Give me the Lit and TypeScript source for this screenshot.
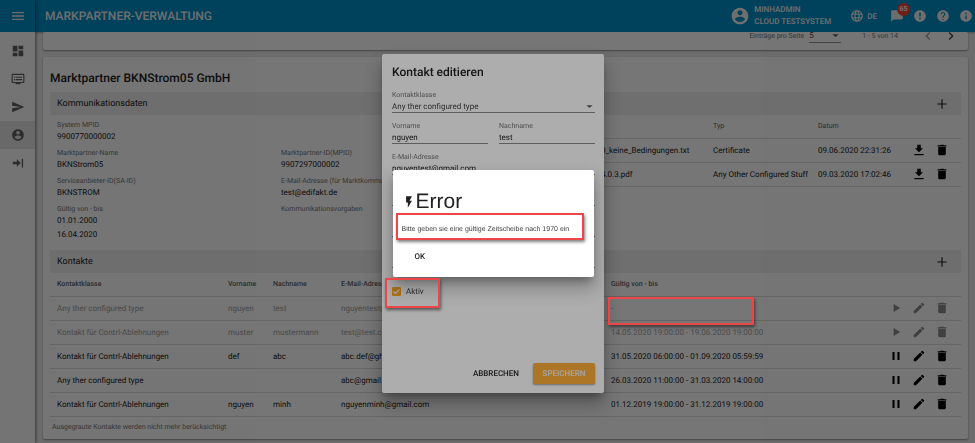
import { LitElement, html, css, svg, nothing } from "lit";
import { customElement, property } from "lit/decorators.js";

const ICONS: Record<string, string> = {
  menu: "M3 18h18v-2H3v2zm0-5h18v-2H3v2zm0-7v2h18V6H3z",
  dashboard: "M3 13h8V3H3v10zm0 8h8v-6H3v6zm10 0h8V11h-8v10zm0-18v6h8V3h-8z",
  list:
    "M21 3H3c-1.1 0-2 .9-2 2v12c0 1.1.9 2 2 2h5v2h8v-2h5c1.1 0 1.990-.9 1.990-2L23 5c0-1.100-.9-2-2-2zm0 14H3V5h18v12zM19 8H8v2h11V8zm0 4H8v2h11v-2zM7 8H5v2h2V8zm0 4H5v2h2v-2z",
  send: "M2.010 21L23 12 2.010 3 2 10l15 2-15 2z",
  account:
    "M12 2C6.480 2 2 6.480 2 12s4.480 10 10 10 10-4.480 10-10S17.520 2 12 2zm0 3c1.660 0 3 1.340 3 3s-1.340 3-3 3-3-1.340-3-3 1.340-3 3-3zm0 14.200c-2.500 0-4.710-1.280-6-3.220.030-1.990 4-3.080 6-3.080 1.990 0 5.970 1.090 6 3.080-1.290 1.940-3.500 3.220-6 3.220z",
  exit: "M3 10h7V5.500L16.800 12 10 18.500V14H3zM18.500 4.500h2.200v15h-2.200z",
  globe:
    "M11.990 2C6.470 2 2 6.480 2 12s4.470 10 9.990 10C17.520 22 22 17.520 22 12S17.520 2 11.990 2zm6.930 6h-2.950c-.32-1.250-.78-2.450-1.380-3.560 1.840.63 3.370 1.910 4.330 3.560zM12 4.040c.83 1.200 1.480 2.530 1.910 3.960h-3.820c.43-1.430 1.080-2.760 1.910-3.960zM4.260 14C4.100 13.360 4 12.690 4 12s.1-1.360.26-2h3.380c-.08.66-.14 1.320-.14 2s.06 1.340.14 2H4.260zm.82 2h2.950c.32 1.250.78 2.450 1.380 3.560-1.840-.63-3.370-1.900-4.330-3.560zm2.950-8H5.080c.96-1.660 2.490-2.930 4.330-3.560C8.810 5.550 8.350 6.750 8.030 8zM12 19.960c-.83-1.200-1.480-2.530-1.910-3.960h3.820c-.43 1.430-1.080 2.760-1.910 3.960zM14.340 14H9.660c-.09-.66-.16-1.320-.16-2s.07-1.350.16-2h4.680c.09.65.16 1.320.16 2s-.07 1.340-.16 2zm.25 5.560c.6-1.110 1.060-2.310 1.380-3.560h2.950c-.96 1.650-2.490 2.930-4.330 3.560zM16.360 14c.08-.66.14-1.320.14-2s-.06-1.340-.14-2h3.380c.16.64.26 1.310.26 2s-.1 1.360-.26 2h-3.380z",
  chat: "M20 2H4c-1.100 0-2 .9-2 2v18l4-4h14c1.100 0 2-.9 2-2V4c0-1.100-.9-2-2-2z",
  alert:
    "M12 2C6.480 2 2 6.480 2 12s4.480 10 10 10 10-4.480 10-10S17.520 2 12 2zm1.300 15.500h-2.600V15h2.600v2.500zm0-4.500h-2.600V6.500h2.600V13z",
  help:
    "M12 2C6.480 2 2 6.480 2 12s4.480 10 10 10 10-4.480 10-10S17.520 2 12 2zm1 17h-2v-2h2v2zm2.070-7.750l-.9.920C13.450 12.900 13 13.500 13 15h-2v-.5c0-1.100.45-2.100 1.170-2.830l1.240-1.260c.37-.36.59-.86.59-1.410 0-1.100-.9-2-2-2s-2 .9-2 2H8c0-2.210 1.790-4 4-4s4 1.790 4 4c0 .88-.36 1.680-.93 2.250z",
  info: "M12 2C6.480 2 2 6.480 2 12s4.480 10 10 10 10-4.480 10-10S17.520 2 12 2zm1.200 15h-2.400v-6h2.400v6zm0-8h-2.400V6.600h2.400V9z",
  left: "M15.410 7.410L14 6l-6 6 6 6 1.410-1.410L10.830 12z",
  right: "M10 6L8.590 7.410 13.170 12l-4.580 4.590L10 18l6-6z",
  down: "M5 9.500l7 6 7-6z",
  plus: "M20 13h-7v7h-2v-7H4v-2h7V4h2v7h7v2z",
  download: "M19 9h-4V3H9v6H5l7 7 7-7zM4 19v2h16v-2H4z",
  trash: "M5.500 19c0 1.100.9 2 2 2h9c1.100 0 2-.9 2-2V7h-13v12zM19.500 4h-4l-1-1h-5l-1 1h-4v2h15V4z",
  play: "M8 5v14l11-7z",
  pause: "M6 19h3.500V5H6v14zm8.500-14v14H18V5h-3.500z",
  edit:
    "M3 17.250V21h3.750L17.810 9.940l-3.750-3.750L3 17.250zM20.710 7.040c.39-.39.39-1.020 0-1.410l-2.340-2.340c-.39-.39-1.020-.39-1.410 0l-1.830 1.830 3.750 3.750 1.830-1.830z",
  bolt: "M7 2v11h3v9l7-12h-4l4-8z",
};

@customElement("mp-icon")
export class MpIcon extends LitElement {
  @property() name = "menu";

  static styles = css`
    :host {
      display: inline-flex;
      flex: none;
      width: var(--size, 14px);
      height: var(--size, 14px);
    }
    .glyph {
      width: 100%;
      height: 100%;
      fill: currentColor;
    }
  `;

  render() {
    return html`<svg class="glyph" viewBox="0 0 24 24" aria-hidden="true">
      ${svg`<path d=${ICONS[this.name]}></path>`}
    </svg>`;
  }
}

const icon = (name: string) => html`<mp-icon name=${name}></mp-icon>`;

const NAV = [
  ["dashboard", "Dashboard"],
  ["list", "Nachrichten"],
  ["send", "Versand"],
  ["account", "Marktpartner"],
  ["exit", "Abmelden"],
];

const DETAILS: [string, string[]][] = [
  ["System MPID", ["9900770000002"]],
  ["", []],
  ["Marktpartner-Name", ["BKNStrom05"]],
  ["Marktpartner-ID(MPID)", ["9907297000002"]],
  ["Serviceanbieter-ID(SA-ID)", ["BKNSTROM"]],
  ["E-Mail-Adresse (für Marktkommunikation)", ["test@edifakt.de"]],
  ["Gültig von - bis", ["01.01.2000", "16.04.2020"]],
  ["Kommunikationsvorgaben", []],
];

const DOCS = [
  ["0_keine_Bedingungen.txt", "Certificate", "09.06.2020 22:31:26"],
  ["4.0.3.pdf", "Any Other Configured Stuff", "09.03.2020 17:02:46"],
];

interface Contact {
  type: string;
  first: string;
  last: string;
  mail: string;
  range: string;
  active: boolean;
}

const CONTACTS: Contact[] = [
  { type: "Any ther configured type", first: "nguyen", last: "test", mail: "nguyentest@gmail.com", range: "-", active: false },
  { type: "Kontakt für Contrl-Ablehnungen", first: "muster", last: "mustermann", mail: "test@test.com", range: "14.05.2020 19:00:00 - 19.06.2020 19:00:00", active: false },
  { type: "Kontakt für Contrl-Ablehnungen", first: "def", last: "abc", mail: "abc.def@ghi.com", range: "31.05.2020 06:00:00 - 01.09.2020 05:59:59", active: true },
  { type: "Any ther configured type", first: "", last: "", mail: "abc@gmail.com", range: "26.03.2020 11:00:00 - 31.03.2020 14:00:00", active: true },
  { type: "Kontakt für Contrl-Ablehnungen", first: "nguyen", last: "minh", mail: "nguyenminh@gmail.com", range: "01.12.2019 19:00:00 - 31.12.2019 19:00:00", active: true },
];

@customElement("app-root")
export class AppRoot extends LitElement {
  static styles = css`
    :host {
      display: block;
      height: 100vh;
      overflow: hidden;
      background: #ececec;
      color: #212121;
      font: 8px/11px Roboto, sans-serif;
      text-rendering: geometricPrecision;
    }
    * {
      box-sizing: border-box;
    }
    button,
    input,
    select {
      margin: 0;
      padding: 0;
      border: 0;
      border-radius: 0;
      outline: 0;
      background: none;
      color: inherit;
      font: inherit;
      text-rendering: inherit;
      appearance: none;
    }
    button {
      display: inline-flex;
      align-items: center;
      justify-content: center;
    }
    h1,
    h2,
    h3,
    p,
    dl,
    dd {
      margin: 0;
      font-weight: 400;
    }
    .shell {
      display: flex;
      height: 100%;
    }
    .side {
      flex: none;
      width: 35px;
      background: #fcfcfc;
      box-shadow: 1px 0 3px rgba(0, 0, 0, 0.5);
      z-index: 2;
    }
    .burger {
      width: 100%;
      height: 32px;
      background: #018ec8;
      color: #ececec;
      --size: 16px;
    }
    .nav {
      display: flex;
      flex-direction: column;
      padding-top: 5px;
    }
    .nav-link {
      display: flex;
      align-items: center;
      justify-content: center;
      height: 28px;
      color: #616161;
    }
    .nav-link.current {
      background: #e4e4e4;
    }
    .body {
      flex: 1;
      min-width: 0;
      display: flex;
      flex-direction: column;
    }
    .bar {
      flex: none;
      display: flex;
      align-items: center;
      height: 32px;
      padding: 0 2px 0 10px;
      background: #018ec8;
      color: #f0f0f0;
      box-shadow: 0 1px 2px rgba(0, 0, 0, 0.3);
      font-weight: 500;
    }
    .app-title {
      flex: 1;
      font-size: 12px;
      line-height: 16px;
      font-weight: 500;
    }
    .user {
      display: flex;
      align-items: center;
      gap: 4px;
      --size: 20px;
      line-height: 12px;
    }
    .lang {
      gap: 3px;
      margin: 0 13px 0 19px;
      font-weight: 500;
    }
    .tools {
      display: flex;
      gap: 9px;
    }
    .tool {
      position: relative;
    }
    .badge {
      position: absolute;
      top: -6px;
      left: 7px;
      width: 13px;
      height: 13px;
      border-radius: 50%;
      background: #f44336;
      color: #fff;
      font-size: 7px;
      line-height: 13px;
      text-align: center;
    }
    .content {
      padding: 0 7px 0 8px;
    }
    .card {
      background: #fff;
      border-radius: 2px;
      box-shadow: 0 1px 2px rgba(0, 0, 0, 0.4);
    }
    .pager {
      display: flex;
      align-items: center;
      justify-content: flex-end;
      height: 18px;
      padding: 0 9px 10px 0;
      color: #757575;
      font-size: 7px;
    }
    .page-size {
      display: flex;
      align-items: center;
      gap: 5px;
    }
    .select-wrap {
      display: flex;
      align-items: center;
      border-bottom: 1px solid #949494;
    }
    .page-size .select-wrap {
      width: 32px;
      height: 14px;
      font-size: 8px;
    }
    .select {
      flex: 1;
      min-width: 0;
      color: #424242;
    }
    .caret {
      --size: 11px;
      display: flex;
      color: #616161;
    }
    .count {
      margin: 0 15px 0 21px;
    }
    .turn {
      --size: 16px;
      margin-left: 7px;
      color: #424242;
    }
    .turn:disabled {
      color: #9e9e9e;
    }
    .partner {
      margin-top: 7px;
      padding: 13px 7px 6px;
    }
    .partner-title {
      font-size: 12px;
      line-height: 16px;
      font-weight: 500;
      padding-bottom: 6px;
    }
    .section {
      display: flex;
      align-items: center;
      justify-content: space-between;
      height: 23px;
      padding: 0 12px 0 7px;
      background: #efefef;
    }
    .section-title {
      font-size: 9px;
      line-height: 14px;
    }
    .split {
      display: grid;
      grid-template-columns: minmax(0, 1fr) 360px;
      padding-bottom: 10px;
    }
    .details {
      display: grid;
      grid-template-columns: 224px minmax(0, 1fr);
      row-gap: 6px;
      padding: 5px 0 0 7px;
      white-space: nowrap;
    }
    .detail {
      min-height: 22px;
    }
    .label {
      color: #757575;
      font-size: 7px;
    }
    .value + .value {
      margin-top: 3px;
    }
    .table {
      width: 100%;
      table-layout: fixed;
      border-collapse: collapse;
      text-align: left;
    }
    .table th,
    .table td {
      height: 24px;
      padding: 0;
      border-bottom: 1px solid #dcdcdc;
      font-weight: 400;
      white-space: nowrap;
    }
    .table th {
      height: 23px;
      color: #616161;
      font-size: 7px;
    }
    .table.contacts th {
      font-weight: 500;
    }
    .contacts th:first-child,
    .contacts td:first-child {
      padding-left: 7px;
    }
    .table .inactive td {
      color: #9e9e9e;
    }
    .actions {
      display: flex;
      justify-content: flex-end;
      gap: 9px;
      padding-right: 12px;
      color: #000;
    }
    .inactive .actions {
      color: #8c8c8c;
    }
    .w-type {
      width: 178px;
    }
    .w-first {
      width: 45px;
    }
    .w-last {
      width: 68px;
    }
    .w-actions {
      width: 80px;
    }
    .w-file {
      width: 112px;
    }
    .w-kind {
      width: 105px;
    }
    .note {
      padding: 5px 2px 0;
      color: #757575;
      font-size: 7px;
    }
    .marked {
      position: relative;
    }
    .mark {
      position: absolute;
      z-index: 30;
      border: 2px solid #ee4548;
      box-shadow: 1px 2px 3px rgba(0, 0, 0, 0.5);
      pointer-events: none;
    }
    .mark-range {
      left: -3px;
      top: 0;
      width: 146px;
      height: 28px;
    }
    .overlay {
      position: fixed;
      inset: 0;
      z-index: 10;
      display: flex;
      align-items: center;
      justify-content: center;
      padding: 4px 0 0 11px;
      background: rgba(0, 0, 0, 0.32);
    }
    .overlay.top {
      z-index: 20;
    }
    .dialog {
      display: flex;
      flex-direction: column;
      width: 222px;
      min-height: 339px;
      padding: 10px 9px 9px 10px;
      border-radius: 2px;
      background: #fff;
      box-shadow: 0 6px 8px -3px rgba(0, 0, 0, 0.3), 0 10px 18px 2px rgba(0, 0, 0, 0.24);
    }
    .dialog-title {
      padding-bottom: 10px;
      font-size: 12px;
      line-height: 16px;
      font-weight: 500;
    }
    .fields {
      display: grid;
      grid-template-columns: 1fr 1fr;
      gap: 8px 11px;
    }
    .field {
      display: flex;
      flex-direction: column;
      min-width: 0;
    }
    .wide {
      grid-column: 1 / -1;
    }
    .input {
      width: 100%;
      height: 12px;
      border-bottom: 1px solid #8a8a8a;
    }
    .input.bare {
      height: 23px;
    }
    .field .select-wrap {
      height: 12px;
      border-color: #8a8a8a;
    }
    .check-row {
      display: flex;
      align-items: center;
      gap: 5px;
      padding-top: 18px;
      color: #424242;
    }
    .check {
      width: 9px;
      height: 9px;
      border-radius: 1px;
      background: #ffab2e
        url("data:image/svg+xml,%3Csvg xmlns='http://www.w3.org/2000/svg' viewBox='0 0 9 9'%3E%3Cpath d='M1.500 4.500l2 2 4-4' fill='none' stroke='white' stroke-width='1.200'/%3E%3C/svg%3E");
    }
    .mark-check {
      left: -8px;
      top: 108px;
      width: 55px;
      height: 30px;
    }
    .buttons {
      display: flex;
      justify-content: flex-end;
      gap: 14px;
      margin-top: auto;
    }
    .btn {
      height: 21px;
      font-size: 8px;
      font-weight: 500;
    }
    .btn.primary {
      width: 62px;
      border-radius: 2px;
      background: #ffae3a;
      color: #f5f5f5;
      box-shadow: 0 1px 2px rgba(0, 0, 0, 0.4);
    }
    .alert {
      position: relative;
      width: 201px;
      min-height: 107px;
      padding: 20px 9px 10px;
      border-radius: 2px;
      background: #fff;
      box-shadow: 0 6px 8px -3px rgba(0, 0, 0, 0.3), 0 10px 18px 2px rgba(0, 0, 0, 0.24);
    }
    .alert-title {
      display: flex;
      align-items: center;
      font: 21px/24px "Liberation Sans", Arial, sans-serif;
      --size: 14px;
    }
    .message {
      position: relative;
      padding-top: 10px;
      color: #424242;
      font: 7px/11px "Liberation Sans", Arial, sans-serif;
      white-space: nowrap;
    }
    .mark-message {
      left: -6px;
      top: -1px;
      width: 188px;
      height: 27px;
    }
    .alert .btn {
      margin: 11px 0 0 13px;
    }
  `;

  private head = (labels: string[]) => html`<thead>
    <tr>
      ${labels.map((l) => html`<th scope="col">${l}</th>`)}
    </tr>
  </thead>`;

  private action = (name: string, label: string) => html`<button aria-label=${label}>${icon(name)}</button>`;

  private renderBar() {
    return html`<header class="bar">
      <h1 class="app-title">MARKPARTNER-VERWALTUNG</h1>
      <div class="user">
        ${icon("account")}
        <div>
          <div>MINHADMIN</div>
          <div>CLOUD TESTSYSTEM</div>
        </div>
      </div>
      <button class="lang">${icon("globe")}DE</button>
      <div class="tools">
        <button class="tool" aria-label="Nachrichten">${icon("chat")}<span class="badge">65</span></button>
        ${this.action("alert", "Hinweise")} ${this.action("help", "Hilfe")} ${this.action("info", "Info")}
      </div>
    </header>`;
  }

  private renderPager() {
    return html`<section class="card pager">
      <label class="page-size"
        >Einträge pro Seite
        <span class="select-wrap"
          ><select class="select">
            <option>5</option></select
          ><span class="caret">${icon("down")}</span></span
        ></label
      >
      <span class="count">1 - 5 von 14</span>
      <button class="turn" disabled aria-label="Zurück">${icon("left")}</button>
      <button class="turn" aria-label="Weiter">${icon("right")}</button>
    </section>`;
  }

  private renderPartner() {
    return html`<section class="card partner">
      <h2 class="partner-title">Marktpartner BKNStrom05 GmbH</h2>
      <div class="section">
        <h3 class="section-title">Kommunikationsdaten</h3>
        ${this.action("plus", "Dokument hinzufügen")}
      </div>
      <div class="split">
        <dl class="details">
          ${DETAILS.map(
            ([label, values]) => html`<div class="detail">
              ${label ? html`<dt class="label">${label}</dt>` : nothing}
              ${values.map((v) => html`<dd class="value">${v}</dd>`)}
            </div>`
          )}
        </dl>
        <div>
          <table class="table">
            <colgroup>
              <col class="w-file" />
              <col class="w-kind" />
              <col />
              <col class="w-actions" />
            </colgroup>
            ${this.head(["", "Typ", "Datum", ""])}
            <tbody>
              ${DOCS.map(
                ([file, kind, date]) => html`<tr>
                  <td>${file}</td>
                  <td>${kind}</td>
                  <td>${date}</td>
                  <td>
                    <div class="actions">${this.action("download", "Herunterladen")}${this.action("trash", "Löschen")}</div>
                  </td>
                </tr>`
              )}
            </tbody>
          </table>
        </div>
      </div>
      <div class="section">
        <h3 class="section-title">Kontakte</h3>
        ${this.action("plus", "Kontakt hinzufügen")}
      </div>
      <table class="table contacts">
        <colgroup>
          <col class="w-type" />
          <col class="w-first" />
          <col class="w-last" />
          <col />
          <col />
          <col class="w-actions" />
        </colgroup>
        ${this.head(["Kontaktklasse", "Vorname", "Nachname", "E-Mail-Adresse", "Gültig von - bis", ""])}
        <tbody>
          ${CONTACTS.map(
            (c, i) => html`<tr class=${c.active ? "" : "inactive"}>
              <td>${c.type}</td>
              <td>${c.first}</td>
              <td>${c.last}</td>
              <td>${c.mail}</td>
              <td class=${i === 0 ? "marked" : ""}>${c.range}${i === 0 ? html`<span class="mark mark-range"></span>` : nothing}</td>
              <td>
                <div class="actions">
                  ${c.active ? this.action("pause", "Deaktivieren") : this.action("play", "Aktivieren")}${this.action("edit", "Bearbeiten")}${this.action("trash", "Löschen")}
                </div>
              </td>
            </tr>`
          )}
        </tbody>
      </table>
      <p class="note">Ausgegraute Kontakte werden nicht mehr berücksichtigt.</p>
    </section>`;
  }

  private field = (label: string, value: string, wide = false) => html`<label class="field ${wide ? "wide" : ""}"
    ><span class="label">${label}</span><input class="input" type="text" .value=${value}
  /></label>`;

  private bareField = (label: string) => html`<input class="input bare wide" type="text" aria-label=${label} />`;

  private renderDialog() {
    return html`<div class="overlay">
      <form class="dialog" role="dialog" aria-labelledby="edit-title">
        <h2 class="dialog-title" id="edit-title">Kontakt editieren</h2>
        <div class="fields">
          <label class="field wide"
            ><span class="label">Kontaktklasse</span>
            <span class="select-wrap"
              ><select class="select">
                <option>Any ther configured type</option></select
              ><span class="caret">${icon("down")}</span></span
            ></label
          >
          ${this.field("Vorname", "nguyen")} ${this.field("Nachname", "test")}
          ${this.field("E-Mail-Adresse", "nguyentest@gmail.com", true)}
          ${this.bareField("Telefon")} ${this.bareField("Gültig von")} ${this.bareField("Gültig bis")}
        </div>
        <label class="check-row"><input class="check" type="checkbox" checked />Aktiv</label>
        <div class="buttons">
          <button class="btn" type="button">ABBRECHEN</button>
          <button class="btn primary" type="button">SPEICHERN</button>
        </div>
      </form>
    </div>`;
  }

  private renderAlert() {
    return html`<div class="overlay top">
      <div class="alert" role="alertdialog" aria-labelledby="alert-title">
        <h2 class="alert-title" id="alert-title">${icon("bolt")}Error</h2>
        <p class="message">Bitte geben sie eine gültige Zeitscheibe nach 1970 ein<span class="mark mark-message"></span></p>
        <button class="btn">OK</button>
        <span class="mark mark-check"></span>
      </div>
    </div>`;
  }

  render() {
    return html`<div class="shell">
        <aside class="side">
          <button class="burger" aria-label="Menü">${icon("menu")}</button>
          <nav class="nav">
            ${NAV.map(
              ([name, label]) =>
                html`<a class="nav-link ${name === "account" ? "current" : ""}" href="#${name}" aria-label=${label}>${icon(name)}</a>`
            )}
          </nav>
        </aside>
        <div class="body">
          ${this.renderBar()}
          <main class="content">${this.renderPager()}${this.renderPartner()}</main>
        </div>
      </div>
      ${this.renderDialog()}${this.renderAlert()}`;
  }
}
